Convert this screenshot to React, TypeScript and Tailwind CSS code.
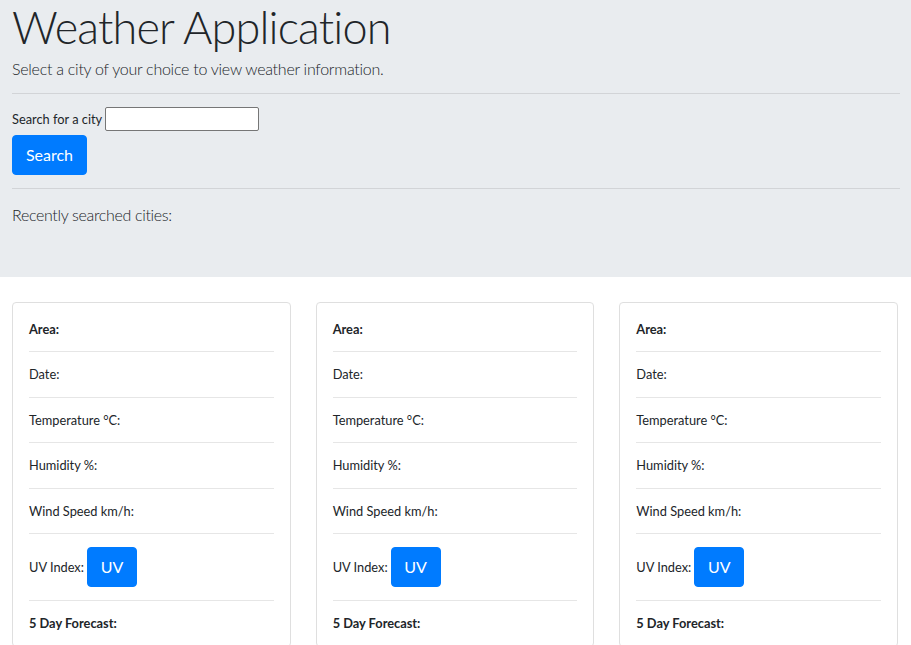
import React from 'react';

const rows = ['Date:', 'Temperature °C:', 'Humidity %:', 'Wind Speed km/h:'];

function Divider() {
  return <div className="h-px bg-[#e6e6e6]" />;
}

function WeatherCard() {
  return (
    <div className="border border-[#dfdfdf] rounded-[4px] bg-white px-[16px] pt-[17px]">
      <div className="pb-[12px] leading-[19px] font-bold">Area:</div>
      {rows.map((label) => (
        <div key={label}>
          <Divider />
          <div className="pt-[13px] pb-[12.6px] leading-[19px]">{label}</div>
        </div>
      ))}
      <Divider />
      <div className="flex items-center py-[13px]">
        <span>UV Index:</span>
        <button className="ml-[3px] w-[50px] h-[40px] bg-[#007bff] border border-[#007bff] rounded-[4px] text-white text-[16px]">
          UV
        </button>
      </div>
      <Divider />
      <div className="pt-[13px] pb-[13px] leading-[19px] font-bold">5 Day Forecast:</div>
    </div>
  );
}

export default function App() {
  return (
    <div
      className="w-[911px] h-[645px] overflow-hidden bg-white text-[#212529] text-[12.8px]"
      style={{ fontFamily: '"Segoe UI", Lato, sans-serif' }}
    >
      {/* Jumbotron */}
      <div className="bg-[#e9ecef] h-[277px] px-[12px] pr-[11px]">
        <h1 className="text-[45px] font-light leading-[54px] tracking-[-0.85px]">Weather Application</h1>
        <p className="text-[16px] font-light leading-[24px] mt-[3px] tracking-[-0.26px]">
          Select a city of your choice to view weather information.
        </p>
        <div className="h-px bg-[#d2d4d7] mt-[12px]" />
        <div className="flex items-center mt-[13px]">
          <label className="leading-[19px] mt-[1px]">Search for a city</label>
          <input
            type="text"
            className="ml-[3px] w-[154px] h-[24px] bg-white border border-[#767676] rounded-[2px] outline-none"
          />
        </div>
        <button className="mt-[4px] w-[75px] h-[40px] bg-[#007bff] border border-[#007bff] rounded-[4px] text-white text-[16px]">
          Search
        </button>
        <div className="h-px bg-[#d2d4d7] mt-[13px]" />
        <p className="text-[16px] font-light leading-[24px] mt-[14px] tracking-[-0.33px]">Recently searched cities:</p>
      </div>

      {/* Cards */}
      <div className="grid grid-cols-3 gap-[25px] pl-[12px] pr-[13px] mt-[25px]">
        <WeatherCard />
        <WeatherCard />
        <WeatherCard />
      </div>
    </div>
  );
}
